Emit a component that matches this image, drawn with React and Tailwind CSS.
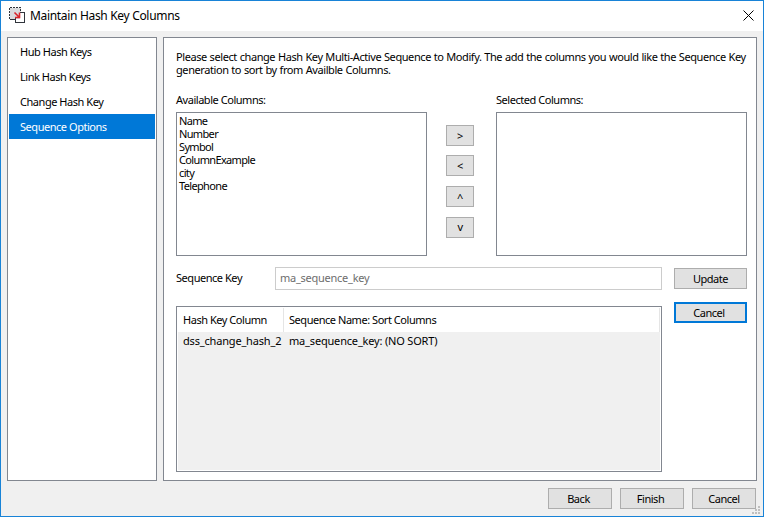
import React from 'react';

const navItems = ['Hub Hash Keys', 'Link Hash Keys', 'Change Hash Key', 'Sequence Options'];
const columns = ['Name', 'Number', 'Symbol', 'ColumnExample', 'city', 'Telephone'];

function Button({ primary = false, className = '', children }) {
  return (
    <button
      className={`flex h-[21px] shrink-0 items-center justify-center bg-[#e1e1e1] ${
        primary ? 'border-2 border-[#0078d7]' : 'border border-[#adadad]'
      } ${className}`}
    >
      {children}
    </button>
  );
}

function AppIcon() {
  return (
    <svg className="mb-0.5" width="17" height="16" viewBox="0 0 17 16" shapeRendering="crispEdges">
      <rect x="0.5" y="0.5" width="11" height="12" fill="#d9dadc" stroke="#30343c" strokeDasharray="2.2 0.9" />
      <path d="M10.5 5.5H15.5V15.5H6.5V11.5H10.5z" fill="#fff" />
      <path d="M11 5.5H15.5V15.5H6.5V11" fill="none" stroke="#30343c" />
      <path d="M5.5 5.5l4.5 4.5M10.5 5.5v5H6" fill="none" stroke="#d9252b" strokeWidth="1.6" shapeRendering="auto" />
    </svg>
  );
}

export default function App() {
  return (
    <div className="flex h-[517px] w-[764px] flex-col border border-[#1883d7] bg-[#f0f0f0] font-['Noto_Sans',sans-serif] text-[11px] leading-[13px] tracking-[-0.46px] text-black">
      <header className="flex h-[30px] shrink-0 items-center bg-white pr-[9px] pl-2">
        <AppIcon />
        <h1 className="ml-1 text-[12px] leading-4 tracking-[-0.32px] whitespace-nowrap">Maintain Hash Key Columns</h1>
        <svg className="mb-px ml-auto" width="11" height="11" viewBox="0 0 11 11">
          <path d="M.5.5l10 10M10.5.5l-10 10" stroke="#000" />
        </svg>
      </header>

      <div className="mt-1.5 flex h-[444px] shrink-0 gap-1.5 px-1.5">
        <nav className="w-[150px] border border-[#828790] bg-white p-px">
          {navItems.map((item, i) => (
            <div
              key={item}
              className={`flex h-[25px] items-center pl-[11px] ${i === 3 ? 'bg-[#0078d7] text-white' : ''}`}
            >
              {item}
            </div>
          ))}
        </nav>

        <main className="w-[594px] border border-[#828790] bg-white pt-3 pl-3">
          <p className="h-[43px] tracking-[-0.42px] whitespace-nowrap [word-spacing:0.35px]">
            Please select change Hash Key Multi-Active Sequence to Modify. The add the columns you would like the Sequence Key
            <br />
            generation to sort by from Availble Columns.
          </p>

          <div className="flex">
            <section className="w-[251px]">
              <h2 className="h-[19px]">Available Columns:</h2>
              <ul className="h-[144px] border border-[#828790] pt-px pl-0.5 tracking-[-0.65px]">
                {columns.map((c) => (
                  <li key={c}>{c}</li>
                ))}
              </ul>
            </section>
            <div className="ml-[19px] flex w-7 flex-col pt-8">
              <Button>&gt;</Button>
              <Button className="mt-[9px]">&lt;</Button>
              <Button className="mt-2.5 pt-0.5">^</Button>
              <Button className="mt-2.5 pb-0.5">v</Button>
            </div>
            <section className="ml-[22px] w-[251px]">
              <h2 className="h-[19px]">Selected Columns:</h2>
              <div className="h-[144px] border border-[#828790]" />
            </section>
          </div>

          <div className="mt-[11px] flex">
            <div className="w-[486px]">
              <div className="flex h-[23px] items-center">
                <label className="w-[99px] pb-0.5">Sequence Key</label>
                <div className="flex h-full flex-1 items-center border border-[#cccccc] pb-0.5 pl-1 tracking-[-0.26px] text-[#6d6d6d]">
                  ma_sequence_key
                </div>
              </div>
              <div className="mt-4 flex h-[166px] flex-col border border-[#828790] p-px">
                <div className="flex h-6 shrink-0">
                  <div className="flex w-[106px] items-center border-r border-[#e5e5e5] pb-px pl-[5px] whitespace-nowrap">
                    Hash Key Column
                  </div>
                  <div className="flex flex-1 items-center border-r border-[#e5e5e5] pb-px pl-[5px]">
                    Sequence Name: Sort Columns
                  </div>
                </div>
                <div className="flex flex-1 bg-[#f0f0f0] pt-0.5 tracking-[-0.18px] whitespace-nowrap">
                  <div className="w-[106px] pl-[5px]">dss_change_hash_2</div>
                  <div className="pl-[5px]">ma_sequence_key: (NO SORT)</div>
                </div>
              </div>
            </div>
            <div className="ml-3 flex w-[73px] flex-col pt-px">
              <Button>Update</Button>
              <Button primary className="mt-[13px] pr-[3px]">Cancel</Button>
            </div>
          </div>
        </main>
      </div>

      <footer className="relative mt-[7px] flex flex-1 justify-end gap-2 pr-[7px]">
        <Button className="w-16 pr-[3px]">Back</Button>
        <Button className="w-16 pr-[3px]">Finish</Button>
        <Button className="w-16">Cancel</Button>
        <svg className="absolute right-[3px] bottom-0.5" width="8" height="8" fill="#bfbfbf">
          <path d="M6 0h2v2H6zM3 3h2v2H3zM6 3h2v2H6zM0 6h2v2H0zM3 6h2v2H3zM6 6h2v2H6z" />
        </svg>
      </footer>
    </div>
  );
}
